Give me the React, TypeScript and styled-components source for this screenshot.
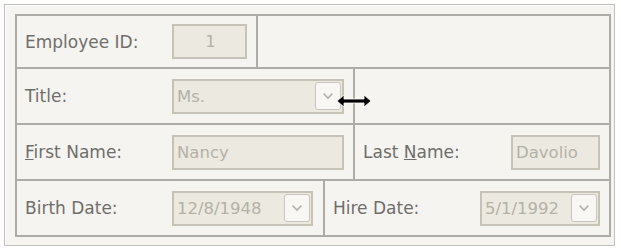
import React from "react";
import styled, { createGlobalStyle } from "styled-components";

const GlobalStyle = createGlobalStyle`
  html, body {
    margin: 0;
    padding: 0;
    background: #ffffff;
  }
  body {
    font-family: "DejaVu Sans", Tahoma, sans-serif;
  }
`;

const Frame = styled.div`
  position: relative;
  width: 611px;
  height: 242px;
  margin: 4px 0 0 4px;
  box-sizing: border-box;
  border: 1px solid #c2c0bb;
  box-shadow: inset 1px 1px 0 #ffffff;
  background: #f5f4f0;
  padding: 9px 5px 0 10px;
`;

const Table = styled.div`
  display: flex;
  flex-direction: column;
  width: 594px;
  border-top: 2px solid #aeaca7;
  border-left: 2px solid #aeaca7;
`;

const Row = styled.div<{ $h?: number }>`
  display: flex;
  height: ${({ $h }) => $h ?? 56}px;
`;

const Cell = styled.div<{ $w?: number }>`
  display: flex;
  align-items: center;
  box-sizing: border-box;
  ${({ $w }) => ($w ? `width: ${$w}px;` : "flex: 1;")}
  border-right: 2px solid #aeaca7;
  border-bottom: 2px solid #aeaca7;
  padding-left: 8px;
`;

const Label = styled.span<{ $w: number }>`
  width: ${({ $w }) => $w}px;
  flex-shrink: 0;
  font-size: 17px;
  color: #6f6e6b;
  white-space: nowrap;
  u {
    text-decoration: underline;
  }
`;

const Field = styled.div<{ $w: number }>`
  display: flex;
  align-items: center;
  box-sizing: border-box;
  width: ${({ $w }) => $w}px;
  height: 35px;
  border: 2px solid #c6c2b8;
  background: #ece9e1;
  padding: 0 1px 0 3px;
  font-size: 16.5px;
  color: #b4b1a6;
  white-space: nowrap;
  overflow: hidden;
`;

const Value = styled.span<{ $center?: boolean }>`
  flex: 1;
  text-align: ${({ $center }) => ($center ? "center" : "left")};
`;

const DropButton = styled.div`
  display: flex;
  align-items: center;
  justify-content: center;
  flex-shrink: 0;
  width: 26px;
  height: 28px;
  box-sizing: border-box;
  border: 1px solid #c9c5bc;
  border-radius: 3px;
  background: #f8f7f3;
`;

const Cursor = styled.svg`
  position: absolute;
  left: 331px;
  top: 89px;
`;

const Chevron = () => (
  <svg width="12" height="8" viewBox="0 0 12 8">
    <path d="M1.5 1.5 L6 6 L10.5 1.5" fill="none" stroke="#b3b0a8" strokeWidth="1.6" />
  </svg>
);

export default function App() {
  return (
    <>
      <GlobalStyle />
      <Frame>
        <Table>
          <Row $h={53}>
            <Cell $w={241}>
              <Label $w={147}>Employee ID:</Label>
              <Field $w={75}>
                <Value $center>1</Value>
              </Field>
            </Cell>
            <Cell />
          </Row>
          <Row>
            <Cell $w={338}>
              <Label $w={147}>Title:</Label>
              <Field $w={172}>
                <Value>Ms.</Value>
                <DropButton>
                  <Chevron />
                </DropButton>
              </Field>
            </Cell>
            <Cell />
          </Row>
          <Row>
            <Cell $w={338}>
              <Label $w={147}>
                <u>F</u>irst Name:
              </Label>
              <Field $w={172}>
                <Value>Nancy</Value>
              </Field>
            </Cell>
            <Cell>
              <Label $w={148}>
                Last <u>N</u>ame:
              </Label>
              <Field $w={89}>
                <Value>Davolio</Value>
              </Field>
            </Cell>
          </Row>
          <Row>
            <Cell $w={308}>
              <Label $w={147}>Birth Date:</Label>
              <Field $w={141}>
                <Value>12/8/1948</Value>
                <DropButton>
                  <Chevron />
                </DropButton>
              </Field>
            </Cell>
            <Cell>
              <Label $w={147}>Hire Date:</Label>
              <Field $w={120}>
                <Value>5/1/1992</Value>
                <DropButton>
                  <Chevron />
                </DropButton>
              </Field>
            </Cell>
          </Row>
        </Table>
        <Cursor width="36" height="14" viewBox="0 0 36 14">
          <path d="M1 7 L8 1 L8 5 L28 5 L28 1 L35 7 L28 13 L28 9 L8 9 L8 13 Z" fill="#000" stroke="#fff" strokeWidth="0.8" />
        </Cursor>
      </Frame>
    </>
  );
}
